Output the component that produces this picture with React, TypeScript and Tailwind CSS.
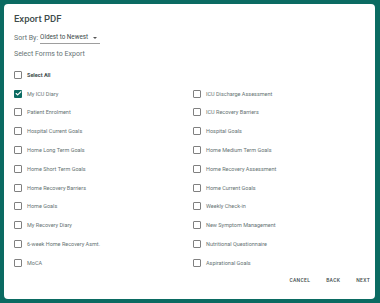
import { Check } from "lucide-react";

const left = [
  { label: "My ICU Diary", checked: true },
  { label: "Patient Enrolment" },
  { label: "Hospital Current Goals" },
  { label: "Home Long Term Goals" },
  { label: "Home Short Term Goals" },
  { label: "Home Recovery Barriers" },
  { label: "Home Goals" },
  { label: "My Recovery Diary" },
  { label: "6-week Home Recovery Asmt." },
  { label: "MoCA" },
];

const right = [
  "ICU Discharge Assessment",
  "ICU Recovery Barriers",
  "Hospital Goals",
  "Home Medium Term Goals",
  "Home Recovery Assessment",
  "Home Current Goals",
  "Weekly Check-in",
  "New Symptom Management",
  "Nutritional Questionnaire",
  "Aspirational Goals",
];

function Box({ checked }: { checked?: boolean }) {
  if (checked) {
    return (
      <span className="flex h-[8px] w-[8px] items-center justify-center rounded-[1px] bg-[#0b6b62]">
        <Check className="h-[7px] w-[7px] text-white" strokeWidth={4} />
      </span>
    );
  }
  return <span className="h-[8px] w-[8px] rounded-[1px] border-[1.3px] border-[#808080]" />;
}

function Row({ label, checked, bold }: { label: string; checked?: boolean; bold?: boolean }) {
  return (
    <div className="flex h-[18.8px] items-center gap-[5px]">
      <Box checked={checked} />
      <span className={bold ? "text-[5.5px] font-bold text-[#3d4b4b]" : "text-[5.5px] text-[#667373]"}>
        {label}
      </span>
    </div>
  );
}

export default function App() {
  return (
    <div className="h-[303px] w-[380px] bg-[#0b6b62] pb-[4px] pl-[4px] pr-[5px] pt-[4px] font-['Roboto',sans-serif]">
      <div className="flex h-full flex-col rounded-[4px] bg-white pl-[10px] pr-[5px] pt-[8px]">
        <h1 className="text-[9.5px] leading-[14px] font-medium text-[#3d4b4b]">Export PDF</h1>

        <div className="mt-[6px] flex h-[12px] items-center gap-[2px] text-[7px] text-[#667373]">
          <span>Sort By:</span>
          <span className="flex h-full items-center gap-[5px] border-b border-[#9e9e9e] pr-[3px] text-[6.3px] text-[#3d4b4b]">
            Oldest to Newest
            <span className="h-0 w-0 border-x-[2px] border-t-[2.5px] border-x-transparent border-t-[#555]" />
          </span>
        </div>

        <p className="mt-[5px] text-[7px] leading-[10px] text-[#667373]">Select Forms to Export</p>

        <div className="mt-[6.5px]">
          <Row label="Select All" bold />
          <div className="grid grid-cols-[179px_1fr]">
            <div>
              {left.map((r) => (
                <Row key={r.label} label={r.label} checked={r.checked} />
              ))}
            </div>
            <div>
              {right.map((r) => (
                <Row key={r} label={r} />
              ))}
            </div>
          </div>
        </div>

        <div className="mt-auto flex h-[22px] items-start justify-end gap-[16px] text-[5px] font-medium tracking-[0.3px] text-[#3d4b4b]">
          <button type="button">CANCEL</button>
          <button type="button">BACK</button>
          <button type="button">NEXT</button>
        </div>
      </div>
    </div>
  );
}
